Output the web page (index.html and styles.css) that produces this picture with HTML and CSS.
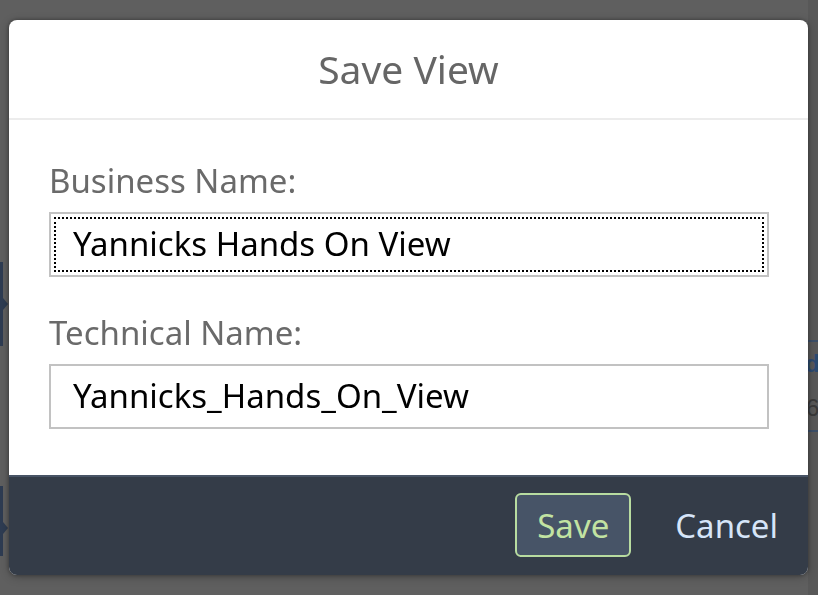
FILE: index.html
```html
<!DOCTYPE html>
<html lang="en">
<head>
  <meta charset="UTF-8" />
  <title>Save View</title>
  <link rel="stylesheet" href="styles.css">
</head>
<body>
  <div class="page">
    <div class="side side-left">
      <span class="tab tab-top"></span>
      <span class="tab tab-bottom"></span>
    </div>
    <div class="side side-right">
      <span class="rule"></span>
      <span class="cell cell-head">ds</span>
      <span class="cell cell-num">6</span>
      <span class="rule"></span>
    </div>
  </div>

  <div class="backdrop">
    <div class="dialog">
      <header class="dialog-header">Save View</header>

      <div class="dialog-body">
        <label class="field-label" for="businessName">Business Name:</label>
        <div class="field field-focus">
          <input id="businessName" type="text" value="Yannicks Hands On View">
        </div>

        <label class="field-label" for="technicalName">Technical Name:</label>
        <div class="field">
          <input id="technicalName" type="text" value="Yannicks_Hands_On_View">
        </div>
      </div>

      <footer class="dialog-footer">
        <button class="btn btn-save">Save</button>
        <button class="btn btn-cancel">Cancel</button>
      </footer>
    </div>
  </div>
</body>
</html>
```

FILE: styles.css
```css
:root {
  --shell: #5f5f5f;
  --footer: #343c48;
  --label: #6a6a6a;
  --field-border: #c2c2c2;
}

* {
  box-sizing: border-box;
}

html, body {
  height: 100%;
}

body {
  margin: 0;
  background: var(--shell);
  font-family: "Noto Sans", sans-serif;
  overflow: hidden;
}

/* dimmed page behind the dialog */
.page {
  height: 100%;
  display: flex;
  justify-content: space-between;
}

.side {
  width: 10px;
  display: flex;
  flex-direction: column;
}

.side-left {
  padding-top: 262px;
  gap: 140px;
}

.tab {
  display: block;
  width: 3px;
  height: 84px;
  background: #2e3c52;
  position: relative;
}

.tab::after {
  content: "";
  position: absolute;
  left: 3px;
  top: 36px;
  border-left: 5px solid #2e3c52;
  border-top: 6px solid transparent;
  border-bottom: 6px solid transparent;
}

.tab-bottom {
  height: 70px;
}

.side-right {
  padding-top: 340px;
  background: #585858;
  overflow: hidden;
}

.rule {
  height: 2px;
  background: #3c4f68;
}

.cell {
  font-family: "Liberation Sans", sans-serif;
  font-size: 24px;
  line-height: 32px;
  height: 44px;
  padding-top: 6px;
  white-space: nowrap;
}

.cell-head {
  color: #2c4a72;
  font-weight: bold;
  margin-left: -3px;
}

.cell-num {
  color: #3a3a3a;
  margin-left: -2px;
}

/* dialog */
.backdrop {
  position: fixed;
  inset: 0;
  padding: 20px 10px 0 9px;
}

.dialog {
  width: 799px;
  height: 555px;
  background: #fff;
  border-radius: 8px;
  overflow: hidden;
  display: flex;
  flex-direction: column;
  box-shadow: 0 0 4px rgba(0, 0, 0, 0.35), 0 2px 10px rgba(0, 0, 0, 0.25);
}

.dialog-header {
  height: 100px;
  border-bottom: 2px solid #ececec;
  text-align: center;
  font-size: 39px;
  line-height: 98px;
  color: #666;
  padding-bottom: 2px;
}

.dialog-body {
  flex: 1;
  padding: 41px 39px 0 40px;
  display: flex;
  flex-direction: column;
}

.field-label {
  font-size: 33px;
  line-height: 40px;
  color: var(--label);
  margin-bottom: 11px;
}

.field {
  height: 65px;
  border: 2px solid var(--field-border);
  margin-bottom: 36px;
  padding: 3px;
}

.field-focus input {
  outline: 2px dotted #000;
  outline-offset: -2px;
}

.field input {
  width: 100%;
  height: 100%;
  border: 0;
  padding: 0 0 2px 19px;
  font-family: inherit;
  font-size: 33px;
  color: #000;
  background: #fff;
}

.dialog-footer {
  height: 100px;
  background: var(--footer);
  border-top: 2px solid #485466;
  display: flex;
  align-items: center;
  justify-content: flex-end;
  gap: 28px;
  padding: 0 14px 2px 0;
}

.btn {
  font-family: inherit;
  font-size: 33px;
  height: 64px;
  border-radius: 6px;
  cursor: pointer;
}

.btn-save {
  width: 116px;
  padding: 0;
  background: #475467;
  color: #c2e3a2;
  border: 2px solid #b8dca0;
}

.btn-cancel {
  background: transparent;
  border: 2px solid transparent;
  color: #d6e5f8;
  padding: 0 14px;
}
```
